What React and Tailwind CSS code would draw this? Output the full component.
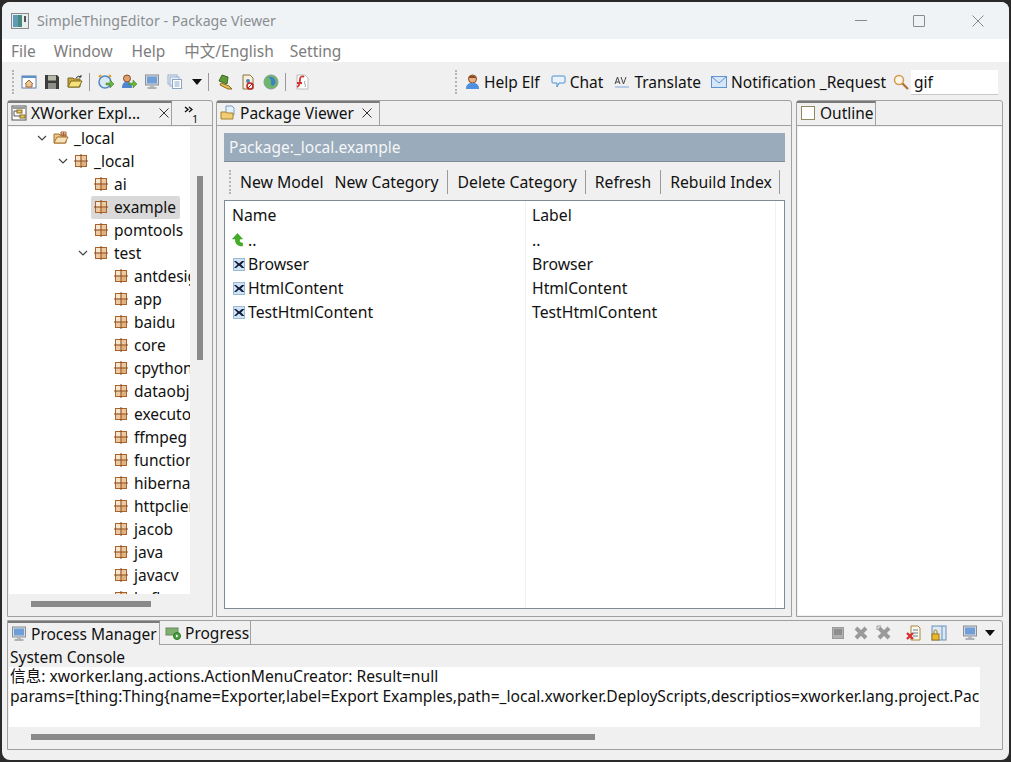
import React from "react";

const F = "font-['Noto_Sans','Noto_Sans_CJK_SC',sans-serif]";

const Pkg = () => (
  <svg width="14" height="14" viewBox="0 0 14 14" className="shrink-0">
    <rect x="1.5" y="1.5" width="11" height="11" fill="#eec9a0" stroke="#a8622c" />
    <rect x="2" y="2" width="4.5" height="4.5" fill="#f8e6cf" />
    <rect x="7.5" y="7.5" width="4.5" height="4.5" fill="#e2b27e" />
    <path d="M7 0v14M0 7h14" stroke="#8a4a1e" strokeWidth="1" />
  </svg>
);

const Chevron = () => (
  <svg width="10" height="6" viewBox="0 0 10 6" className="shrink-0">
    <path d="M1 1l4 4 4-4" fill="none" stroke="#444" strokeWidth="1.2" />
  </svg>
);

function TreeRow({ indent, label, open, selected, icon }) {
  return (
    <div className={`h-[23px] flex items-center whitespace-nowrap ${indent}`}>
      <div className="w-[14px] shrink-0 flex justify-start pl-[1px] pb-[2px]">{open && <Chevron />}</div>
      <div className={`flex items-center h-[23px] pl-[3px] pr-[4px] pb-[2px] rounded-[2px] ${selected ? "bg-[#d9d9d9]" : ""}`}>
        {icon || <Pkg />}
        <span className={icon ? "ml-[5px]" : "ml-[6px]"}>{label}</span>
      </div>
    </div>
  );
}

const FolderPkg = () => (
  <svg width="16" height="14" viewBox="0 0 16 14" className="shrink-0">
    <path d="M1 3h5l1 1h6v8H1z" fill="#e8c68f" stroke="#a8702c" />
    <path d="M4 6h11l-3 6H1z" fill="#f6e2b8" stroke="#a8702c" />
    <path d="M8 1h5v4H8zM10.5 1v4M8 3h5" fill="none" stroke="#a8622c" />
  </svg>
);

const Doc = () => (
  <svg width="14" height="15" viewBox="0 0 14 15" className="shrink-0">
    <rect x="1.5" y="1.5" width="11" height="12" fill="#cfe2f6" stroke="#9bb8d8" />
    <path d="M2 4l3.5 3.5L2 11h2l3-2.5 3 2.5h2.5L9 7.5 12.5 4H10L7 6.5 4 4z" fill="#0e1a36" />
  </svg>
);

const UpArrow = () => (
  <svg width="14" height="14" viewBox="0 0 14 14" className="shrink-0">
    <path d="M5.5 0.5L0.5 6h3v2c0 3 3 5 7 5v-3c-2 0-3-1-3-2V6h3z" fill="#42b024" stroke="#2b8a12" strokeWidth=".5" />
  </svg>
);

const Monitor = ({ s = 16 }) => (
  <svg width={s} height={s} viewBox="0 0 16 16" className="shrink-0">
    <rect x="1.5" y="1" width="13" height="10" fill="#d7dbe0" stroke="#8a8f96" />
    <rect x="3" y="2.5" width="10" height="7" fill="#6f9ed8" />
    <path d="M6 11h4v2H6z" fill="#b5b8bc" />
    <path d="M3.5 14h9" stroke="#9a9ea3" strokeWidth="1.5" />
  </svg>
);

const Sep = () => <div className="w-[1px] h-[18px] bg-[#9a9a9a] ml-[2.5px] mr-[4.5px] shrink-0" />;
const Grip = () => <div className="w-[2px] h-[24px] border-l-2 border-dotted border-[#b5b5b5] shrink-0" />;

const I = ({ children }) => (
  <svg width="16" height="16" viewBox="0 0 16 16" className="shrink-0 mx-[3.5px]">{children}</svg>
);

function MainToolbar() {
  return (
    <div className="h-[38px] bg-[#f0f0f0] flex items-center pl-[10px] pr-[11px] pt-[2px] shrink-0">
      <Grip />
      <div className="flex items-center ml-[3.5px]">
        <I>
          <rect x="1" y="2" width="14" height="12" fill="#fff" stroke="#5d7fa8" />
          <path d="M1 2h14v2H1z" fill="#5d8fc8" />
          <path d="M4 10l4-4 4 4M5 10v3h6v-3" fill="#e8c79a" stroke="#a8622c" />
        </I>
        <I>
          <path d="M1 1h12l2 2v12H1z" fill="#3c3c3c" />
          <rect x="4" y="1.5" width="8" height="5" fill="#b8b8a8" />
          <rect x="4" y="9" width="8" height="6" fill="#8e8e86" />
        </I>
        <I>
          <path d="M1 4h5l1 1h6v8H1z" fill="#c9a53f" stroke="#7c6a20" />
          <path d="M4 7h11l-3 6H1z" fill="#f7e27a" stroke="#7c6a20" />
          <path d="M9 4q2-3 5-1M14 1v2h-2" fill="none" stroke="#333" />
        </I>
      </div>
      <Sep />
      <div className="flex items-center">
        <I>
          <circle cx="7" cy="8" r="6" fill="#dbe8f5" stroke="#4f86c0" strokeWidth="1.5" />
          <path d="M1 3l2-2M13 3l-2-2" stroke="#e8a020" strokeWidth="2" />
          <path d="M8 9h4V6l4 4-4 4v-3H8z" fill="#6cb33f" stroke="#3f7f20" strokeWidth=".5" />
        </I>
        <I>
          <circle cx="6" cy="4.5" r="3.5" fill="#e0a070" stroke="#8a4a20" />
          <path d="M1 14c0-5 2-6 5-6s5 1 5 6z" fill="#4f86d0" />
          <path d="M8 9h4V6l4 4-4 4v-3H8z" fill="#6cb33f" stroke="#3f7f20" strokeWidth=".5" />
        </I>
        <div className="mx-[3.5px]"><Monitor /></div>
        <I>
          <rect x="1" y="1" width="9" height="9" fill="#e8eff8" stroke="#9ab0cc" />
          <rect x="3" y="3" width="9" height="9" fill="#e8eff8" stroke="#9ab0cc" />
          <rect x="5.5" y="5.5" width="9" height="9" fill="#fff" stroke="#8aa4c4" />
          <path d="M7.5 8h5M7.5 10h5M7.5 12h5" stroke="#8aa4c4" />
        </I>
        <svg width="10" height="6" viewBox="0 0 10 6" className="ml-[5px] mr-[4px]"><path d="M0 0h10L5 6z" fill="#111" /></svg>
      </div>
      <Sep />
      <div className="flex items-center">
        <I>
          <path d="M2 7l3-6 6 2-1 7z" fill="#5f9a3a" stroke="#3d6a20" />
          <path d="M4 9l8 3 3 3-4 0-8-4z" fill="#e8c050" stroke="#8a6a20" />
        </I>
        <I>
          <path d="M3 1h7l3 3v11H3z" fill="#f5efdc" stroke="#8a7440" />
          <circle cx="8" cy="7" r="2" fill="#5580b0" />
          <circle cx="10" cy="12" r="3" fill="#fff" stroke="#c02020" strokeWidth="1.5" />
          <path d="M8 14l4-4" stroke="#c02020" />
        </I>
        <I>
          <circle cx="8" cy="8" r="7" fill="#6cb868" stroke="#8a9a90" />
          <path d="M5 3q5-1 7 3t-3 6q-2-2-1-4T5 3z" fill="#3f7fc8" />
        </I>
      </div>
      <Sep />
      <I>
        <path d="M3 1h8l3 3v11H3z" fill="#fff" stroke="#bbb" />
        <path d="M3 13c3-1 3-5 3-8s3-3 4-2M3 9h5" fill="none" stroke="#d93030" strokeWidth="1.8" />
        <path d="M11 7q-1 2 0 3t0 3" fill="none" stroke="#999" />
      </I>
      <div className="flex-1" />
      <Grip />
      <div className="flex items-center ml-[8px] text-[#111]">
        <svg width="15" height="16" viewBox="0 0 15 16" className="shrink-0">
          <circle cx="7.5" cy="5" r="4" fill="#e8b080" stroke="#8a4a20" />
          <path d="M3 4q4-5 9 0" fill="#8a4a20" />
          <path d="M1 15c0-5 3-6 6.5-6s6.5 1 6.5 6z" fill="#4f8fe0" />
        </svg>
        <span className="ml-[4px]">Help Elf</span>
        <svg width="15" height="14" viewBox="0 0 15 14" className="ml-[11px] shrink-0">
          <path d="M2 1h11q1 0 1 1v5q0 1-1 1H8l-2 4V8H2Q1 8 1 7V2q0-1 1-1z" fill="#eaf3fc" stroke="#4f8fd0" />
        </svg>
        <span className="ml-[4px]">Chat</span>
        <svg width="16" height="16" viewBox="0 0 16 16" className="ml-[11px] shrink-0">
          <path d="M1 10l2.5-7L6 10M2 8h3M7 3l2.5 7L12 3" fill="none" stroke="#444" strokeWidth="1" />
          <path d="M1 13h14" stroke="#7aa8d8" />
        </svg>
        <span className="ml-[4px]">Translate</span>
        <svg width="16" height="12" viewBox="0 0 16 12" className="ml-[10px] shrink-0">
          <rect x=".5" y=".5" width="15" height="11" fill="#d5e6f8" stroke="#5f94d0" />
          <path d="M1 1l7 6 7-6" fill="none" stroke="#5f94d0" />
        </svg>
        <span className="ml-[4px]">Notification _Request</span>
        <svg width="16" height="16" viewBox="0 0 16 16" className="ml-[7px] shrink-0">
          <circle cx="6" cy="6" r="4.5" fill="#fff6e8" stroke="#d09a50" strokeWidth="1.5" />
          <path d="M9.5 9.5L15 15" stroke="#b07030" strokeWidth="2.2" />
        </svg>
        <div className="ml-[2px] w-[87px] h-[25px] bg-white border-b border-[#c8c8c8] pl-[3px] leading-[25px]">gif</div>
      </div>
    </div>
  );
}

function ActiveTab({ icon, label, closeCls, wClass }) {
  return (
    <div className={`relative z-10 h-[24px] flex items-center bg-[#f0f0f0] border-t-2 border-[#7a7a7a] border-r border-r-[#a0a0a0] whitespace-nowrap -mb-[1px] ${wClass}`}>
      <span className="ml-[3px] flex">{icon}</span>
      <span className="ml-[4px] text-[#111]">{label}</span>
      {closeCls && (
        <svg width="10" height="10" viewBox="0 0 10 10" className={`absolute top-[5px] ${closeCls}`}>
          <path d="M0.5 0.5l9 9M9.5 0.5l-9 9" stroke="#333" strokeWidth="1" />
        </svg>
      )}
    </div>
  );
}

const Explorer = () => (
  <svg width="16" height="16" viewBox="0 0 16 16">
    <rect x="1" y="1" width="14" height="14" fill="#fff" stroke="#555" />
    <path d="M2 2h12v2H2z" fill="#9a9a9a" />
    <rect x="6" y="5" width="5" height="3" fill="#e8c860" stroke="#8a6a20" />
    <rect x="9" y="10" width="5" height="3" fill="#e8c860" stroke="#8a6a20" />
    <path d="M3 6h3M3 6v5h6" fill="none" stroke="#555" />
  </svg>
);

const PkgFolder = () => (
  <svg width="16" height="16" viewBox="0 0 16 16">
    <path d="M6 1h6l2 2v7H6z" fill="#e4effa" stroke="#7a9ac0" />
    <path d="M1 7h5l1 1h6v6H1z" fill="#f0cd70" stroke="#a88030" />
  </svg>
);

const Outline = () => (
  <svg width="16" height="16" viewBox="0 0 16 16">
    <rect x="1.5" y="1.5" width="13" height="13" fill="#fff" stroke="#8f8860" />
  </svg>
);

const treeItems = [
  ["pl-[27px]", "_local", true, false, <FolderPkg />],
  ["pl-[48px]", "_local", true, false],
  ["pl-[68px]", "ai"],
  ["pl-[68px]", "example", false, true],
  ["pl-[68px]", "pomtools"],
  ["pl-[68px]", "test", true],
  ["pl-[88px]", "antdesign"],
  ["pl-[88px]", "app"],
  ["pl-[88px]", "baidu"],
  ["pl-[88px]", "core"],
  ["pl-[88px]", "cpython"],
  ["pl-[88px]", "dataobject"],
  ["pl-[88px]", "executor"],
  ["pl-[88px]", "ffmpeg"],
  ["pl-[88px]", "function"],
  ["pl-[88px]", "hibernate"],
  ["pl-[88px]", "httpclient"],
  ["pl-[88px]", "jacob"],
  ["pl-[88px]", "java"],
  ["pl-[88px]", "javacv"],
  ["pl-[88px]", "kafka"],
];

function LeftPanel() {
  return (
    <div className="w-[206px] shrink-0 border border-[#a0a0a0] rounded-t-[3px] flex flex-col bg-[#f0f0f0]">
      <div className="h-[25px] flex border-b border-[#a0a0a0] shrink-0">
        <ActiveTab icon={<Explorer />} label="XWorker Expl..." closeCls="right-[2px]" wClass="w-[164px] pb-[2px]" />
        <div className="flex-1 relative text-[11px] leading-none text-[#111] h-[24px]">
          <svg width="9" height="7" viewBox="0 0 9 7" className="absolute left-[12px] top-[5px]">
            <path d="M1 1l3 2.5-3 2.5M5 1l3 2.5-3 2.5" fill="none" stroke="#111" strokeWidth="1.4" />
          </svg>
          <span className="absolute left-[20px] top-[12px]">1</span>
        </div>
      </div>
      <div className="flex-1 flex min-h-0 pl-[1px] pt-[1px]">
        <div className="w-[181px] h-[467px] bg-white overflow-hidden text-[#111] shrink-0">
          {treeItems.map(([indent, label, open, selected, icon]) => (
            <TreeRow key={indent + label} indent={indent} label={label} open={open} selected={selected} icon={icon} />
          ))}
        </div>
        <div className="ml-[7px] mt-[49px] w-[6px] h-[184px] bg-[#8a8a8a]" />
      </div>
      <div className="h-[22px] shrink-0 pl-[23px] pt-[7px]">
        <div className="w-[120px] h-[6px] bg-[#8a8a8a]" />
      </div>
    </div>
  );
}

const ToolBtn = ({ children, cls = "" }) => <span className={`whitespace-nowrap ${cls}`}>{children}</span>;
const VSep = () => <div className="w-[1px] h-[24px] bg-[#9a9a9a] shrink-0" />;

function Row({ icon, name, label }) {
  return (
    <div className="h-[24px] flex items-center text-[#111]">
      <div className="w-[301px] flex items-center pl-[7px] shrink-0">
        {icon}
        <span className="ml-[2px]">{name}</span>
      </div>
      <div className="pl-[6px]">{label}</div>
    </div>
  );
}

function CenterPanel() {
  return (
    <div className="flex-1 min-w-0 ml-[3px] border border-[#a0a0a0] rounded-t-[3px] flex flex-col bg-[#f0f0f0]">
      <div className="h-[25px] flex border-b border-[#a0a0a0] shrink-0">
        <ActiveTab icon={<PkgFolder />} label="Package Viewer" closeCls="right-[7px]" wClass="w-[163px] pb-[2px]" />
      </div>
      <div className="flex-1 flex flex-col min-h-0 pl-[7px] pr-[6px] pt-[7px] pb-[7px]">
        <div className="h-[29px] bg-[#9aabbb] border-b border-[#7f8c98] text-[#f4f6f8] pl-[5px] leading-[28px] shrink-0">Package:_local.example</div>
        <div className="h-[38px] flex items-center shrink-0 pl-[5px] pt-[1px] text-[#111] text-[15.75px]">
          <Grip />
          <ToolBtn cls="ml-[9px]">New Model</ToolBtn>
          <ToolBtn cls="ml-[11px]">New Category</ToolBtn>
          <div className="ml-[8px]"><VSep /></div>
          <ToolBtn cls="ml-[10px]">Delete Category</ToolBtn>
          <div className="ml-[8px]"><VSep /></div>
          <ToolBtn cls="ml-[9px]">Refresh</ToolBtn>
          <div className="ml-[9px]"><VSep /></div>
          <ToolBtn cls="ml-[9px]">Rebuild Index</ToolBtn>
          <div className="ml-[7px]"><VSep /></div>
        </div>
        <div className="relative flex-1 min-h-0 bg-white border border-[#7f8c98] pt-[1px] text-[15.75px]">
          <div className="absolute left-[300px] top-0 bottom-0 w-[1px] bg-[#eef2f6]" />
          <div className="absolute left-[550px] top-0 bottom-0 w-[1px] bg-[#eef2f6]" />
          <div className="h-[26px] flex items-center text-[#111]">
            <div className="w-[301px] pl-[7px] shrink-0">Name</div>
            <div className="pl-[6px]">Label</div>
          </div>
          <Row icon={<UpArrow />} name=".." label=".." />
          <Row icon={<Doc />} name="Browser" label="Browser" />
          <Row icon={<Doc />} name="HtmlContent" label="HtmlContent" />
          <Row icon={<Doc />} name="TestHtmlContent" label="TestHtmlContent" />
        </div>
      </div>
    </div>
  );
}

function RightPanel() {
  return (
    <div className="w-[207px] shrink-0 ml-[4px] border border-[#a0a0a0] rounded-t-[3px] flex flex-col bg-[#f0f0f0]">
      <div className="h-[25px] flex border-b border-[#a0a0a0] shrink-0">
        <ActiveTab icon={<Outline />} label="Outline" wClass="w-[79px] pb-[2px]" />
      </div>
      <div className="flex-1 mx-[1px] mt-[1px] mb-[1px] bg-white" />
    </div>
  );
}

const GrayX = () => (
  <svg width="14" height="14" viewBox="0 0 14 14"><path d="M2 2l10 10M12 2L2 12" stroke="#9a9a9a" strokeWidth="4" /></svg>
);

function BottomPanel() {
  return (
    <div className="h-[130px] mt-[3px] border border-[#a0a0a0] rounded-tr-[3px] flex flex-col bg-[#f0f0f0] shrink-0">
      <div className="h-[24px] flex border-b border-[#a0a0a0] shrink-0">
        <ActiveTab icon={<Monitor />} label="Process Manager" wClass="w-[152px]" />
        <div className="h-[23px] flex items-center border-r border-[#a0a0a0] w-[91px] text-[#111] whitespace-nowrap">
          <svg width="16" height="16" viewBox="0 0 16 16" className="ml-[5px] shrink-0">
            <rect x="1" y="3" width="12" height="7" fill="#7fb070" stroke="#6a8a60" />
            <circle cx="12" cy="11" r="3.5" fill="#4aa040" stroke="#2c7a26" />
            <path d="M11 9.5l2.5 1.5L11 12.5z" fill="#fff" />
          </svg>
          <span className="ml-[4px]">Progress</span>
        </div>
        <div className="flex-1" />
        <div className="flex items-center pr-[7px]">
          <svg width="12" height="12" viewBox="0 0 12 12"><rect x=".5" y=".5" width="11" height="11" fill="#b0b0b0" stroke="#9a9a9a" /><rect x="2" y="2" width="8" height="6" fill="#8e8e8e" /></svg>
          <span className="ml-[10px] flex"><GrayX /></span>
          <span className="ml-[8px] flex">
            <svg width="16" height="16" viewBox="0 0 16 16"><path d="M3 3l10 10M13 3L3 13" stroke="#9a9a9a" strokeWidth="4" /><path d="M1 1h4M1 1v4" stroke="#9a9a9a" /></svg>
          </span>
          <span className="ml-[14px] flex">
            <svg width="16" height="16" viewBox="0 0 16 16"><path d="M5 1h7l2 2v12H5z" fill="#fff8e8" stroke="#a88a40" /><path d="M7 5h5M7 8h5M7 11h5" stroke="#5580b0" /><path d="M1 8l6 6M7 8l-6 6" stroke="#d93030" strokeWidth="2.4" /></svg>
          </span>
          <span className="ml-[9px] flex">
            <svg width="16" height="16" viewBox="0 0 16 16"><rect x="1" y="1" width="14" height="14" fill="#dce8f4" stroke="#6a8fb8" /><path d="M11 1v14" stroke="#6a8fb8" /><rect x="1" y="9" width="7" height="6" fill="#e8b830" stroke="#a07a10" /><path d="M3 9V6.5a1.5 1.5 0 013 0V9" fill="none" stroke="#a07a10" /></svg>
          </span>
          <span className="ml-[15px] flex"><Monitor /></span>
          <svg width="10" height="6" viewBox="0 0 10 6" className="ml-[7px]"><path d="M0 0h10L5 6z" fill="#111" /></svg>
        </div>
      </div>
      <div className="pl-[1px] pt-[2px] flex flex-col flex-1 min-h-0">
        <div className="h-[20px] leading-[20px] text-[#111] pl-[1px] shrink-0">System Console</div>
        <div className="w-[971px] h-[60px] bg-white overflow-hidden text-[#111] text-[15.65px] whitespace-nowrap shrink-0 pl-[1px] leading-[20px]">
          <div className="-mt-[1px]">信息: xworker.lang.actions.ActionMenuCreator: Result=null</div>
          <div>params=[thing:Thing{"{"}name=Exporter,label=Export Examples,path=_local.xworker.DeployScripts,descriptios=xworker.lang.project.PackageViewer</div>
        </div>
        <div className="pl-[22px] pt-[7px]">
          <div className="w-[564px] h-[6px] bg-[#8a8a8a]" />
        </div>
      </div>
    </div>
  );
}

export default function App() {
  return (
    <div className={`w-[1011px] h-[762px] bg-[#2a2a2a] overflow-hidden text-[15.5px] leading-[22px] ${F}`}>
      <div className="w-[1007px] h-[758px] ml-[2px] mt-[2px] rounded-[8px] overflow-hidden bg-[#f0f0f0] flex flex-col">
        <div className="h-[37px] bg-[#eff3f6] flex items-center pl-[9px] shrink-0">
          <svg width="18" height="16" viewBox="0 0 18 16" className="shrink-0">
            <rect x=".5" y=".5" width="17" height="15" fill="#e8eef0" stroke="#8a8a8a" />
            <path d="M2 2h9v12H2z" fill="#4a8a7a" />
            <path d="M2 2h5v12H2z" fill="#5f9ab8" />
            <path d="M14 3v6" stroke="#555" strokeWidth="2" />
          </svg>
          <span className="ml-[8px] text-[14.2px] text-[#8a8d90]">SimpleThingEditor - Package Viewer</span>
          <div className="flex-1" />
          <div className="w-[12px] h-[1px] bg-[#8a8a8a]" />
          <div className="ml-[46px] w-[12px] h-[12px] border border-[#8a8a8a] rounded-[1px]" />
          <svg width="12" height="12" viewBox="0 0 12 12" className="ml-[47px] mr-[25px]"><path d="M.5.5l11 11M11.5.5l-11 11" stroke="#8a8a8a" /></svg>
        </div>
        <div className="h-[23px] bg-white flex items-center pl-[9px] text-[#7d7d7d] shrink-0 gap-[18px]">
          <span>File</span>
          <span>Window</span>
          <span className="ml-[1px]">Help</span>
          <span className="ml-[1px]">中文/English</span>
          <span className="-ml-[2px]">Setting</span>
        </div>
        <MainToolbar />
        <div className="flex-1 min-h-0 flex flex-col pl-[5px] pr-[6px] pb-[10px]">
          <div className="flex-1 min-h-0 flex">
            <LeftPanel />
            <CenterPanel />
            <RightPanel />
          </div>
          <BottomPanel />
        </div>
      </div>
    </div>
  );
}
